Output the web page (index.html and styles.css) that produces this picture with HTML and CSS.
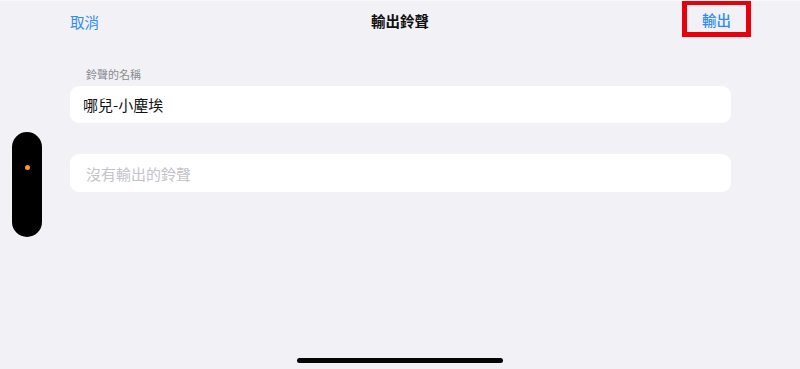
FILE: index.html
```html
<!DOCTYPE html>
<html lang="zh-Hant">
<head>
<meta charset="utf-8">
<title>輸出鈴聲</title>
<link rel="stylesheet" href="styles.css">
</head>
<body>
<div class="screen">
  <header class="nav">
    <span class="nav-left"><span class="nav-btn cancel">取消</span></span>
    <span class="nav-title">輸出鈴聲</span>
    <span class="nav-right"><span class="nav-btn export">輸出</span></span>
  </header>
  <main class="form">
    <div class="field-label">鈴聲的名稱</div>
    <div class="field value">哪兒-小塵埃</div>
    <div class="field placeholder">沒有輸出的鈴聲</div>
  </main>
  <div class="pill"><span class="pill-dot"></span></div>
  <div class="home-bar"></div>
</div>
</body>
</html>
```

FILE: styles.css
```css
* { box-sizing: border-box; }
html, body {
  margin: 0;
  padding: 0;
}
body {
  background: #f1f1f6;
  font-family: "Noto Sans CJK TC", "Noto Sans", sans-serif;
}
.screen {
  position: relative;
  width: 800px;
  height: 369px;
  overflow: hidden;
  border-top: 1px solid #f8f8fb;
}
.nav {
  display: grid;
  grid-template-columns: 1fr auto 1fr;
  align-items: center;
  height: 39px;
  padding: 0 49px;
}
.nav-left {
  justify-self: start;
  padding-left: 21px;
}
.nav-btn {
  color: #2f8cf4;
  font-size: 14.5px;
  line-height: 20px;
}
.nav-title {
  font-size: 14.5px;
  font-weight: 700;
  color: #111;
  line-height: 20px;
}
.nav-right {
  justify-self: end;
  align-self: start;
  margin-top: -1px;
}
.export {
  display: flex;
  align-items: center;
  justify-content: center;
  width: 69px;
  height: 37px;
  border: 5px solid #e8000b;
  padding-top: 2px;
  font-weight: 500;
}
.form {
  padding: 27px 69px 0 70px;
}
.field-label {
  font-size: 11px;
  line-height: 14px;
  color: #8b8b90;
  padding-left: 16px;
  margin-bottom: 5px;
}
.field {
  background: #fff;
  border-radius: 9px;
  height: 37px;
  display: flex;
  align-items: center;
  font-size: 15px;
}
.value {
  padding-left: 13px;
  color: #111;
}
.placeholder {
  margin-top: 31px;
  height: 38px;
  padding-left: 16px;
  color: #c3c3c8;
}
.pill {
  position: absolute;
  left: 12px;
  top: 131px;
  width: 30px;
  height: 105px;
  border-radius: 15px;
  background: #000;
}
.pill-dot {
  position: absolute;
  left: 13px;
  top: 33px;
  width: 5px;
  height: 5px;
  border-radius: 50%;
  background: #ff9c0a;
}
.home-bar {
  position: absolute;
  left: 297px;
  top: 357px;
  width: 206px;
  height: 5px;
  border-radius: 3px;
  background: #050505;
}
```
